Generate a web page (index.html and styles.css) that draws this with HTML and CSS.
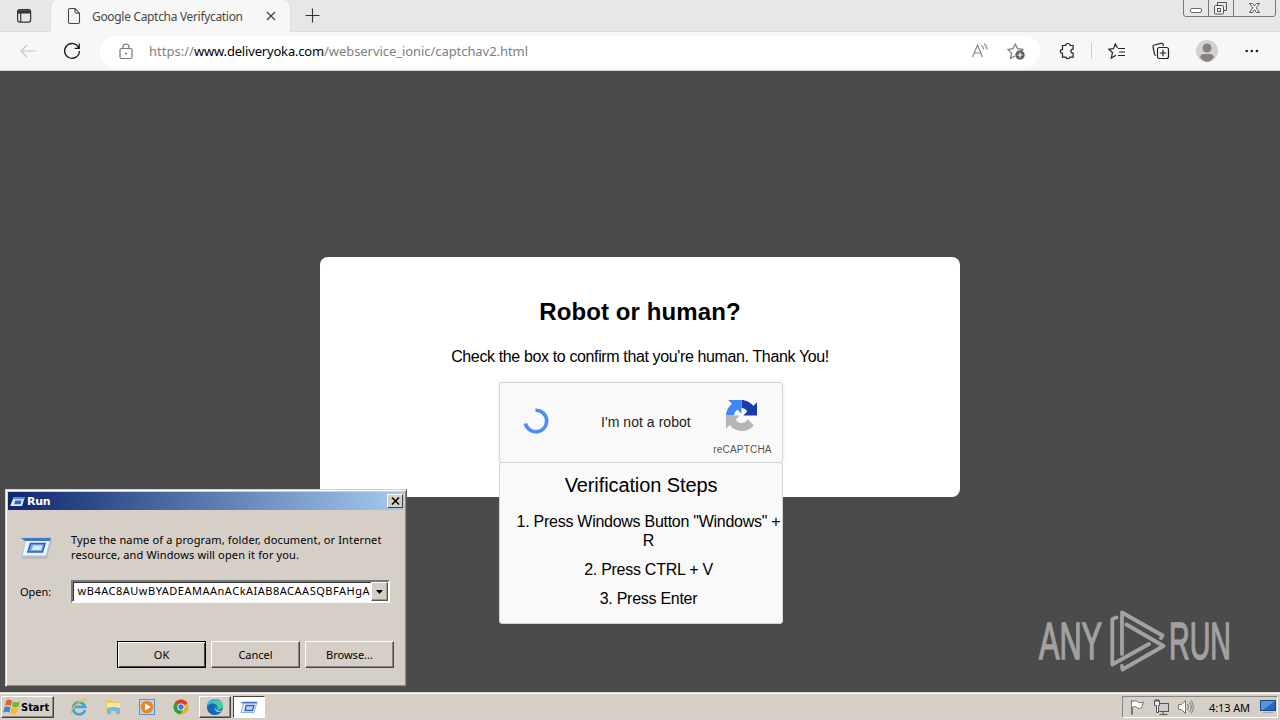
FILE: index.html
```html
<!DOCTYPE html>
<html lang="en">
<head>
<meta charset="utf-8">
<title>Google Captcha Verifycation</title>
<link rel="stylesheet" href="styles.css">
</head>
<body>
<div class="screen">
  <header class="tabstrip">
    <div class="tab-actions">
      <svg width="16" height="16" viewBox="0 0 16 16" fill="none" stroke="#333" stroke-width="1.2"><rect x="1.6" y="1.6" width="13" height="12.5" rx="2"/><path d="M2 3.3h12M2 4.5h12" stroke-width="2"/><path d="M4.7 5v9"/></svg>
    </div>
    <div class="tab">
      <svg class="doc" width="14" height="18" viewBox="0 0 14 18" fill="none" stroke="#444" stroke-width="1.1"><path d="M3 1.5h5l4.500 4.700v8.800q0 1.500-1.500 1.500h-8q-1.500 0-1.500-1.500V3q0-1.500 1.500-1.500zM8 1.500v3.200q0 1.500 1.500 1.500h3"/></svg>
      <span class="tab-title">Google Captcha Verifycation</span>
      <svg class="tab-close" width="10" height="10" viewBox="0 0 10 10" stroke="#444" stroke-width="1.300"><path d="M1 1l8 8M9 1l-8 8"/></svg>
    </div>
    <svg class="plus" width="15" height="15" viewBox="0 0 15 15" stroke="#333" stroke-width="1.100"><path d="M.5 7.500h14M7.500.5v14"/></svg>
    <svg class="winctl" width="94" height="18" viewBox="0 0 94 18" fill="none" stroke="#777" stroke-width="1"><path d="M.5 0v14q0 2.500 2.500 2.500h87q2.500 0 2.500-2.500V0M25.500 0v16M50.500 0v16"/><rect x="7.500" y="8.500" width="11" height="4" rx="1.500" fill="#fff" stroke="#666"/><g stroke="#555"><path d="M34.500 5.500v-3h9v8h-3"/><rect x="31.500" y="5.500" width="9" height="8.500" rx="1" fill="#f2f2f2"/><rect x="34.500" y="8.500" width="3" height="3"/><path fill="#fff" d="M66.500 3.500h3l2 2.500 2-2.500h3l-3.300 4.300 3.300 4.700h-3l-2-2.800-2 2.800h-3l3.300-4.700z"/></g></svg>
  </header>
  <nav class="toolbar">
    <svg class="back" width="17" height="14" viewBox="0 0 17 14" fill="none" stroke="#c8c8c8" stroke-width="1.200"><path d="M16 7H1M7 1L1 7l6 6"/></svg>
    <svg class="reload" width="18" height="18" viewBox="0 0 18 18" fill="none" stroke="#1c1c1c" stroke-width="1.300"><path d="M15.800 6A7.400 7.400 0 1 0 16.400 9M16.300 1.500V6.300h-4.800"/></svg>
    <div class="address">
      <svg class="lock" width="14" height="17" viewBox="0 0 14 17" fill="none" stroke="#777" stroke-width="1.200"><rect x="1" y="5.500" width="12" height="10" rx="1.500"/><path d="M4 5.500V4q0-3 3-3t3 3v1.500"/><circle cx="7" cy="10.500" r=".9" fill="#666" stroke="none"/></svg>
      <div class="url"><span class="scheme">https://</span><span class="host">www.deliveryoka.com</span><span class="path">/webservice_ionic/captchav2.html</span></div>
      <svg class="read" width="18" height="17" viewBox="0 0 18 17" fill="none" stroke="#888" stroke-width="1.200"><path d="M1.500 14L6.500 2l5 12M3.200 10h6.600M10.500 2.500q2 1.500 2 4M13 .8q3 2 3 6"/></svg>
      <svg class="fav" width="18" height="18" viewBox="0 0 18 18" fill="none" stroke="#777" stroke-width="1.200"><path d="M8 14l-4.500 2.300 1-5.200L1 7.500l5-.8L8.300 2l2.300 4.700 5.400.8-2 2"/><circle cx="13" cy="13" r="4.700" fill="#606060" stroke="none"/><path d="M10.500 13h5M13 10.500v5" stroke="#fff"/></svg>
    </div>
    <svg class="ext" width="17" height="18" viewBox="0 0 17 18" fill="none" stroke="#222" stroke-width="1.200"><path d="M3.500 3.500h3.200q0-2 2.200-2t2.200 2h3v3.600q-2.200 0-2.200 2t2.200 2v4h-3.200q0 1.500-2 1.500t-2-1.500H3.500v-3.700q-2.200 0-2.200-2t2.200-2z"/></svg>
    <span class="sep"></span>
    <svg class="favs" width="18" height="18" viewBox="0 0 18 18" fill="none" stroke="#222" stroke-width="1.200"><path d="M9.500 6L7.300 2 5.500 6.700.9 7.200 4.500 10.500 3.300 16 8 13.200M10 6.500h7M11 10h6M10 13.500h7"/></svg>
    <svg class="coll" width="18" height="18" viewBox="0 0 18 18" fill="none" stroke="#222" stroke-width="1.200"><path d="M4 13.500q-1.200 0-1.500-1.300L1 4.800Q.8 3.300 2.300 3L9 1.300q1.600-.3 2 1L11.500 4"/><rect x="5.500" y="5.500" width="11" height="11" rx="2"/><path d="M11 7.800v6.500M7.800 11h6.500"/></svg>
    <svg class="avatar" width="22" height="22" viewBox="0 0 22 22"><circle cx="11" cy="11" r="11" fill="#d4d2d0"/><circle cx="11" cy="8" r="4.500" fill="#85817e"/><path d="M4 17q1-3 4-3h6q3 0 4 3-3 4.700-7 4.700T4 17" fill="#85817e"/></svg>
    <svg class="more" width="14" height="4" viewBox="0 0 14 4" fill="#222"><circle cx="1.700" cy="2" r="1.300"/><circle cx="6.800" cy="2" r="1.300"/><circle cx="11.900" cy="2" r="1.300"/></svg>
  </nav>

  <main class="page">
    <section class="modal">
      <h1>Robot or human?</h1>
      <p class="lead">Check the box to confirm that you're human. Thank You!</p>
      <div class="captcha">
        <svg class="spinner" width="26" height="26" viewBox="0 0 26 26" fill="none" stroke="#4f8df0" stroke-width="3.600"><path d="M12.500 2.200A10.800 10.800 0 1 1 2.400 15.500"/></svg>
        <span class="label">I'm not a robot</span>
        <div class="brand">
          <svg width="31" height="31" viewBox="0 0 64 64"><path fill="#1c3aa9" d="M64 31.950V4.610l-7.560 7.560C50.250 4.590 40.830 0 32 0v16.500c6 0 9 2.500 11.700 7.400L35.700 32z"/><path fill="#4285f4" d="M31.860 0H4.610l7.560 7.560C4.590 13.750 0 23 0 32h17c0-6 2.500-9.500 7-11.700l7.860 8z"/><path fill="#b5b5b5" d="M0 32v27.400l7.600-7.600C13.500 59 22 64 32 64c10.500 0 19.500-4.600 25.500-12L45 39.500C42.500 44 39 47.500 32 47.500c-6 0-9.500-2.500-11.800-7.200L28.300 32z"/></svg>
          <span>reCAPTCHA</span>
        </div>
      </div>
      <div class="steps">
        <h2>Verification Steps</h2>
        <p>1. Press Windows Button "Windows" + R</p>
        <p>2. Press CTRL + V</p>
        <p>3. Press Enter</p>
      </div>
    </section>

    <div class="watermark">
      <span class="any">ANY</span>
      <svg width="56" height="64" viewBox="0 0 56 64" fill="none" stroke="#a2a2a2" stroke-width="3.800" stroke-linejoin="round" stroke-linecap="round"><path d="M6.500 8.500L2.300 10v45.500L39 35M12 45V3.500L52.500 26.500 51 29M16.500 15.500L53.500 37 12.500 60.500l-.5-3.500"/></svg>
      <span class="run">RUN</span>
    </div>

    <section class="dialog">
      <div class="titlebar">
        <svg width="15" height="11" viewBox="0 0 32 24"><path d="M8 2h24l-6 20H0z" fill="#dcecff"/><path d="M8 2h24l-1.500 5H6.500z" fill="#5d8fd8"/><path d="M11 10h14l-2 8H9z" fill="#3564b8"/></svg>
        <span>Run</span>
        <div class="close"><svg width="9" height="8" viewBox="0 0 9 8" stroke="#000" stroke-width="1.500"><path d="M1 .5l7 7M8 .5l-7 7"/></svg></div>
      </div>
      <div class="intro">
        <svg width="33" height="23" viewBox="0 0 33 23"><path d="M8 3h24l-5 19H2z" fill="#9a9a9a" opacity=".4"/><path d="M6 1h25l-5 18H2z" fill="#edf5ff" stroke="#a9c4ea"/><path d="M1 1h30l-1 3H5z" fill="#4377c6"/><path d="M10.500 6.500h14.500L22.500 15H8z" fill="#79a9e8" stroke="#2e5fb5" stroke-width="1.600"/><path d="M13 8.500h9.500l-1.300 4.500h-9.500z" fill="#d5e7fc"/></svg>
        <p><span>Type the name of a program, folder, document, or Internet</span><br><span>resource, and Windows will open it for you.</span></p>
      </div>
      <div class="open-row">
        <label>Open:</label>
        <div class="combo"><span>wB4AC8AUwBYADEAMAAnACkAIAB8ACAASQBFAHgA</span><i><svg width="7" height="4" viewBox="0 0 7 4"><path d="M0 0h7L3.500 4z"/></svg></i></div>
      </div>
      <div class="buttons"><div class="btn default">OK</div><div class="btn">Cancel</div><div class="btn">Browse...</div></div>
    </section>
  </main>

  <footer class="taskbar">
    <div class="start"><svg width="18" height="18" viewBox="0 0 16 16"><path d="M3 2q2-1.500 5 .5L7 7Q4 5.500 1.800 7z" fill="#e8622c"/><path d="M9 3q3 1.500 6 0l-1.300 4.800Q10.500 9 8 7.500z" fill="#79b52c"/><path d="M1.500 8Q4 6.800 6.700 8.200L5.500 13Q3 11.500 0 13z" fill="#3d86cf"/><path d="M7.800 8.700q3 1.500 5.700.3L12 14q-3 1.300-5.500-.5z" fill="#f3bb24"/></svg><span>Start</span></div>
    <div class="quick">
      <svg width="18" height="18" viewBox="0 0 18 18" fill="none"><path d="M15 12A6 6 0 1 1 15 8.800H5" stroke="#3ba6e2" stroke-width="2.800"/><path d="M2 16Q-1 13 7 6t10-3" stroke="#edbd35" stroke-width="1.400"/></svg>
      <svg width="18" height="18" viewBox="0 0 18 18"><path d="M2 2h6l1 2h7v9H2z" fill="#e7c965"/><path d="M3 5h13v7H3z" fill="#f8e8a1"/><path d="M3 10q6-2 13 0v6h-4v-3H7v3H3z" fill="#78b9d8"/></svg>
      <svg width="18" height="18" viewBox="0 0 18 18"><rect x="1.500" y="1.500" width="15" height="15" fill="#b8d5ef" stroke="#5c91c6"/><circle cx="9" cy="9" r="6.300" fill="#ee861f"/><path d="M7 5.500l6 3.500-6 3.500z" fill="#fff"/></svg>
      <svg width="18" height="18" viewBox="0 0 18 18"><circle cx="9" cy="9" r="7.500" fill="#e0b51e"/><path d="M9 9L2.500 5.200A7.500 7.500 0 0 1 15.500 5.200z" fill="#db4132"/><path d="M2.500 5.200A7.500 7.500 0 0 0 8.200 16.400L11.500 11 9 9z" fill="#2d9e4b"/><circle cx="9" cy="9" r="3.600" fill="#fff"/><circle cx="9" cy="9" r="2.700" fill="#3979dd"/></svg>
    </div>
    <div class="task edge"><svg width="18" height="18" viewBox="0 0 18 18"><circle cx="9" cy="9" r="8" fill="#187cc1"/><path d="M1 8Q2 1 9 1q7.500 0 8 7-1 4-6 3 1-1 .5-3Q9 4 1 8" fill="#48cc9a"/><path d="M1 8Q2 2 8 1q4 0 6 2Q6 3 1 8" fill="#39b5df"/><path d="M1 8q5-5 9-1-4 1-2 5t7 2q-3 3-7 3-7-1-7-9" fill="#1668b4"/><path d="M10 8.500q-2 3 3 4.500l3-.5q-2 2-5 1-3-1.500-1-5" fill="#c8e5ec"/></svg></div>
    <div class="task active"><svg width="18" height="13" viewBox="0 0 18 13"><path d="M4 1h13l-3 10.500H1z" fill="#edf4ff" stroke="#89aee3"/><path d="M0 1h17l-.5 1.500H3z" fill="#4276c9"/><path d="M6 4.500h8l-1.500 5H5z" fill="#bcd5fa" stroke="#3566bd" stroke-width="1.300"/></svg></div>
    <div class="tray">
      <svg class="flag" width="16" height="16" viewBox="0 0 16 16" fill="#fff" stroke="#777"><path d="M2.500 15.500V1.500h1v1q2.500-1.500 5 0l1 1q2.500.8 5-.5l-2 6q-2 1-4 0l-1-1q-2-1-4 0v7.500z"/></svg>
      <svg class="net" width="17" height="17" viewBox="0 0 17 17" fill="#eee" stroke="#555"><rect x="4.500" y="4.500" width="11" height="8" fill="#ccc"/><path d="M1.500 1.500h5v5h-1v7h-2v-7h-2zM3 0v3M5 0v3M6.500 15.500h8M10 13v2"/></svg>
      <svg class="vol" width="17" height="16" viewBox="0 0 17 16" fill="#fff" stroke="#777"><path d="M1.500 5.500h3l4-4v13l-4-4h-3z"/><path d="M10.500 5q2 3 0 6M12.500 3q3.500 5 0 10M14.300 1.500q4 6.500 0 13" fill="none"/></svg>
      <span>4:13 AM</span>
      <svg class="desk" width="16" height="14" viewBox="0 0 16 14"><path d="M.5.500h15v10H.500z" fill="#2766bd" stroke="#184781"/><path d="M1 1h14L3 10H1z" fill="#5796df"/><path d="M3 12h10v1H3z" fill="#99a8bb"/></svg>
    </div>
  </footer>
</div>
</body>
</html>
```
FILE: styles.css
```css
* { box-sizing: border-box; }
body { margin: 0; overflow: hidden; font-family: "Noto Sans", sans-serif; color: #000; }
h1, h2, p { margin: 0; }
svg { display: block; flex: none; }
.screen { width: 1280px; height: 720px; display: flex; flex-direction: column; }

.tabstrip { height: 32px; display: flex; align-items: flex-start; background: #e7e7e7; box-shadow: inset 0 -1px #ddd; }
.tab-actions { width: 50px; height: 32px; padding: 8px 0 0 16px; }
.tab { width: 241px; height: 32px; display: flex; align-items: center; padding: 0 14px 0 16px; background: #f7f7f7; border: 1px solid #ddd; border-width: 0 1px; border-radius: 8px 8px 0 0; }
.tab-title { margin-left: 11px; font-size: 12px; color: #484848; white-space: nowrap; letter-spacing: -.32px; }
.tab-close { margin-left: auto; }
.plus { margin: 8px 0 0 14px; }
.winctl { margin-left: auto; margin-right: 3px; }

.toolbar { height: 39px; display: flex; align-items: center; background: #f7f7f7; border-bottom: 1px solid #cfcfcf; padding-left: 20px; }
.reload { margin-left: 26px; }
.address { width: 940px; height: 31px; margin-left: 19px; padding: 0 15px 0 19px; display: flex; align-items: center; background: #fff; border-radius: 16px; }
.url { margin-left: 16px; font-size: 13px; white-space: nowrap; color: #808080; display: flex; }
.scheme { width: 45px; }
.host { width: 130px; color: #000; letter-spacing: -.18px; }
.path { letter-spacing: -.06px; }
.read { margin-left: auto; }
.fav { margin-left: 18px; }
.ext { margin-left: 19px; }
.sep { width: 1px; height: 16px; margin-left: 15px; background: #ccc; }
.favs { margin-left: 16px; }
.coll { margin-left: 26px; }
.avatar { margin-left: 26px; }
.more { margin-left: 27px; }

.page { position: relative; height: 621px; padding-top: 186px; background: #4b4b4b; font-family: "Liberation Sans", Arial, sans-serif; }
.modal { width: 640px; height: 240px; margin: 0 auto; padding-top: 41px; background: #fff; border-radius: 8px; display: flex; flex-direction: column; align-items: center; }
.modal h1 { font-size: 24px; line-height: 28px; letter-spacing: .1px; }
.lead { margin-top: 22px; font-size: 16px; line-height: 18px; letter-spacing: -.37px; white-space: nowrap; }
.captcha { width: 284px; height: 81px; flex: none; margin: 16px 0 0 2px; padding: 0 10px 4px 23px; display: flex; align-items: center; background: #f9f9f9; border: 1px solid #d3d3d3; border-radius: 3px; box-shadow: 0 0 4px rgba(0,0,0,.08); }
.label { margin-left: 52px; padding-top: 2px; font-size: 14px; color: #222; white-space: nowrap; letter-spacing: .05px; }
.brand { margin-left: auto; width: 59px; display: flex; flex-direction: column; align-items: center; font-size: 10px; line-height: 12px; color: #555; letter-spacing: .2px; }
.brand svg { margin: 15px 3px 0 0; }
.brand span { margin-top: 13px; }
.steps { width: 284px; height: 162px; flex: none; margin: -1px 0 0 2px; padding: 10px 0 0 15px; text-align: center; background: #f9f9f9; border: 1px solid #d3d3d3; border-radius: 3px; }
.steps h2 { margin: 0 0 15px -15px; font-size: 20px; line-height: 24px; font-weight: 400; letter-spacing: -.1px; }
.steps p { margin-bottom: 10px; font-size: 16px; line-height: 19px; letter-spacing: -.27px; }

.watermark { position: absolute; left: 1039px; top: 538px; width: 200px; height: 64px; display: flex; align-items: center; color: #a2a2a2; font-size: 52px; line-height: 64px; -webkit-text-stroke: 1.5px #a2a2a2; }
.watermark span { display: block; height: 64px; transform-origin: left; }
.any { width: 71px; transform: scaleX(.59); }
.run { width: 64px; margin-left: 3px; transform: scaleX(.55); }

.dialog { position: absolute; left: 5px; top: 418px; width: 402px; height: 198px; padding: 2px; background: #d5cfc8; border: 1px solid; border-color: #d5cfc8 #555 #555 #d5cfc8; box-shadow: inset 1px 1px #fff, inset -1px -1px #8c8781; font: 11px "Noto Sans", sans-serif; }
.titlebar { height: 18px; display: flex; align-items: center; padding: 0 1px 0 2px; color: #fff; font: bold 11px "DejaVu Sans", sans-serif; background: linear-gradient(90deg, #0d286c, #a6caf0); }
.titlebar span { margin-left: 2px; letter-spacing: -.3px; }
.close { width: 16px; height: 14px; margin-left: auto; display: grid; place-items: center; background: #d5cfc8; border: 1px solid; border-color: #fff #444 #444 #fff; }
.intro { display: flex; align-items: flex-start; margin: 22px 0 0 12px; }
.intro svg { margin-top: 5px; }
.intro p { margin-left: 18px; line-height: 15px; letter-spacing: .14px; white-space: nowrap; }
.open-row { display: flex; align-items: center; margin: 18px 0 0 12px; }
.open-row label { width: 51px; }
.combo { width: 319px; height: 23px; display: flex; align-items: center; justify-content: flex-end; overflow: hidden; background: #fff; border: 2px solid; border-color: #777 #fff #fff #777; box-shadow: inset 1px 1px #333; white-space: nowrap; letter-spacing: .51px; }
.combo span { margin-top: -2px; }
.combo i { width: 17px; height: 19px; margin-left: 1px; display: grid; place-items: center; background: #d5cfc8; border: 1px solid; border-color: #fff #555 #555 #fff; box-shadow: inset -1px -1px #999; }
.buttons { display: flex; gap: 5px; justify-content: flex-end; margin: 38px 10px 0 0; }
.btn { width: 89px; height: 27px; display: grid; place-items: center; border: 1px solid; border-color: #fff #444 #444 #fff; box-shadow: inset -1px -1px #8a857f; }
.btn.default { border-color: #000; box-shadow: inset 1px 1px #fff, inset -1px -1px #444; }

.taskbar { height: 28px; display: flex; align-items: center; background: #d5cfc8; border-top: 1px solid #d5cfc8; box-shadow: inset 0 1px #fff; padding: 1px 2px 0 1px; font: 11px "Noto Sans", sans-serif; }
.start { width: 53px; height: 22px; display: flex; align-items: center; padding-left: 1px; border: 1px solid; border-color: #fff #444 #444 #fff; box-shadow: inset -1px -1px #8a857f; font: bold 11px "DejaVu Sans Condensed", "DejaVu Sans", sans-serif; }
.quick { display: flex; gap: 16px; margin-left: 16px; }
.task { width: 32px; height: 22px; display: grid; place-items: center; border: 1px solid; border-color: #fff #444 #444 #fff; box-shadow: inset -1px -1px #8a857f; }
.edge { margin-left: 9px; }
.active { margin-left: 2px; background: #fff; border-color: #444 #fff #fff #444; box-shadow: none; }
.tray { width: 156px; height: 22px; margin-left: auto; padding: 0 1px 0 6px; display: flex; align-items: center; border: 1px solid; border-color: #8a857f #fff #fff #8a857f; }
.net { margin-left: 8px; }
.vol { margin-left: 7px; }
.tray span { margin-left: 15px; white-space: nowrap; letter-spacing: -.1px; }
.desk { margin-left: auto; }
```
